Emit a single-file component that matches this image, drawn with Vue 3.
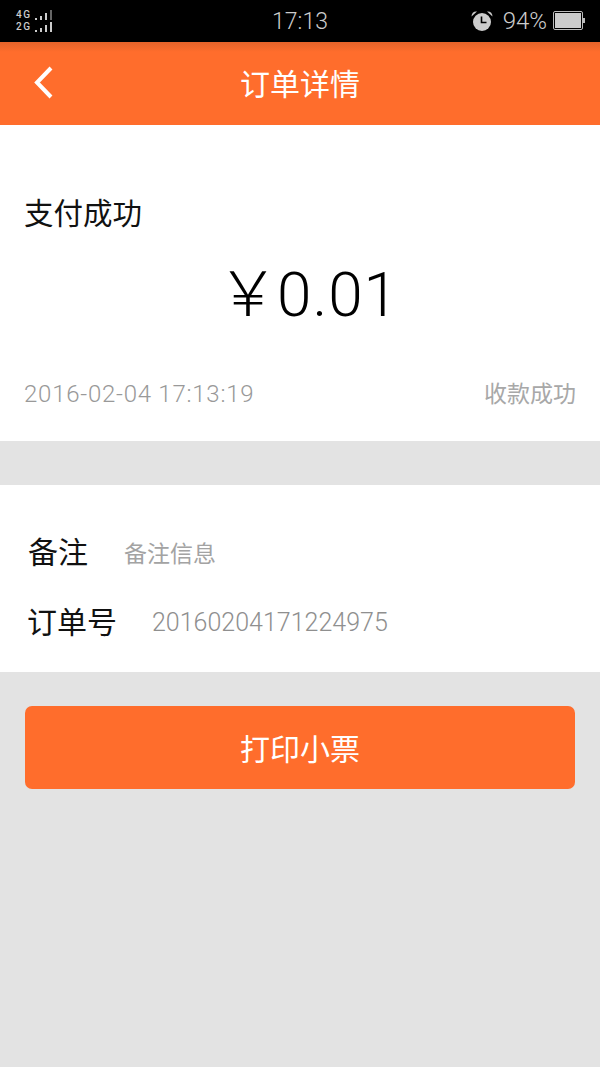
<template>
  <div class="page">
    <!-- status bar -->
    <div class="status-bar">
      <div class="signal">
        <div class="signal-row">
          <span class="net">4G</span>
          <svg width="18" height="10" viewBox="0 0 18 10">
            <rect x="1" y="8" width="2" height="2" fill="#ccc" />
            <rect x="6" y="6" width="2" height="4" fill="#ccc" />
            <rect x="11" y="3" width="2" height="7" fill="#ccc" />
            <rect x="16" y="0" width="2" height="10" fill="#666" />
          </svg>
        </div>
        <div class="signal-row">
          <span class="net">2G</span>
          <svg width="18" height="10" viewBox="0 0 18 10">
            <rect x="1" y="8" width="2" height="2" fill="#ccc" />
            <rect x="6" y="6" width="2" height="4" fill="#ccc" />
            <rect x="11" y="3" width="2" height="7" fill="#ccc" />
            <rect x="16" y="0" width="2" height="10" fill="#ccc" />
          </svg>
        </div>
      </div>
      <span class="clock">17:13</span>
      <div class="status-right">
        <svg class="alarm" width="24" height="22" viewBox="0 0 24 22">
          <circle cx="12" cy="12" r="9" fill="#ccc" />
          <path d="M1.500 6.500 C1.500 3 4 1 7 1.500 Z" fill="#ccc" />
          <path d="M22.500 6.500 C22.500 3 20 1 17 1.500 Z" fill="#ccc" />
          <path d="M11.500 6.500 V12.500 H16.500" fill="none" stroke="#000" stroke-width="1.600" />
        </svg>
        <span class="percent">94%</span>
        <svg class="battery" width="33" height="20" viewBox="0 0 33 20">
          <rect x="0.500" y="0.500" width="29" height="18" rx="1.500" fill="none" stroke="#bbb" />
          <rect x="2" y="2" width="26" height="15" fill="#ccc" />
          <rect x="30" y="7" width="2" height="5" fill="#bbb" />
        </svg>
      </div>
    </div>

    <!-- header -->
    <header class="nav">
      <svg class="back" width="22" height="34" viewBox="0 0 22 34">
        <path d="M18 2 L4 16.500 L18 31" fill="none" stroke="#fff" stroke-width="4" />
      </svg>
      <h1 class="nav-title">订单详情</h1>
    </header>

    <!-- payment summary -->
    <section class="card summary">
      <div class="pay-state">支付成功</div>
      <div class="amount"><span class="yen">￥</span>0.01</div>
      <div class="summary-foot">
        <span class="time">2016-02-04 17:13:19</span>
        <span class="result">收款成功</span>
      </div>
    </section>

    <!-- order info -->
    <section class="card info">
      <div class="row remark">
        <span class="label">备注</span>
        <span class="value">备注信息</span>
      </div>
      <div class="row order">
        <span class="label">订单号</span>
        <span class="value order-no">20160204171224975</span>
      </div>
    </section>

    <button class="print-btn">打印小票</button>
  </div>
</template>

<script setup>
</script>

<style>
html,
body {
  margin: 0;
  background: #e3e3e3;
}
</style>

<style scoped>
.page {
  width: 600px;
  height: 1067px;
  background: #e3e3e3;
  font-family: "Liberation Sans", "Noto Sans CJK SC", sans-serif;
  overflow: hidden;
}

.status-bar {
  height: 42px;
  background: #000;
  display: flex;
  align-items: center;
  justify-content: space-between;
  padding: 0 14px 0 16px;
  box-sizing: border-box;
  color: #ccc;
  position: relative;
}

.signal {
  display: flex;
  flex-direction: column;
  gap: 2px;
  width: 36px;
}

.signal-row {
  display: flex;
  align-items: flex-end;
  justify-content: space-between;
  height: 10px;
}

.net {
  font-size: 10px;
  line-height: 10px;
  letter-spacing: 1.500px;
  font-family: "Roboto", sans-serif;
  font-weight: 500;
  color: #ccc;
}

.clock {
  position: absolute;
  left: 0;
  right: 0;
  text-align: center;
  font-size: 23px;
  font-family: "Roboto", sans-serif;
  font-weight: 300;
}

.status-right {
  display: flex;
  align-items: center;
}

.alarm {
  margin-right: 9px;
}

.percent {
  font-size: 24px;
  font-family: "Roboto", sans-serif;
  font-weight: 300;
  margin-right: 6px;
}

.nav {
  height: 83px;
  box-sizing: border-box;
  padding-bottom: 3px;
  background: linear-gradient(#e5632a 0, #ff6d2c 10px, #ff6d2c 100%);
  display: flex;
  align-items: center;
  justify-content: center;
  position: relative;
}

.back {
  position: absolute;
  left: 33px;
  top: 24px;
}

.nav-title {
  margin: 0;
  font-size: 30px;
  font-weight: 400;
  color: #fff;
}

.card {
  background: #fff;
}

.summary {
  height: 316px;
  padding: 0 24px;
  box-sizing: border-box;
  display: flex;
  flex-direction: column;
}

.pay-state {
  margin-top: 69px;
  font-size: 29.500px;
  line-height: 40px;
  color: #111;
}

.amount {
  margin-top: 25px;
  padding-left: 14px;
  text-align: center;
  font-size: 62px;
  line-height: 72px;
  letter-spacing: 1px;
  color: #000;
  font-family: "Roboto", "Noto Sans CJK SC", sans-serif;
  font-weight: 300;
}

.yen {
  margin-left: 2px;
  letter-spacing: -2px;
}

.summary-foot {
  margin-top: 46px;
  display: flex;
  justify-content: space-between;
  align-items: center;
  font-size: 24px;
  line-height: 34px;
  color: #999;
}

.time {
  font-family: "Roboto", sans-serif;
  font-weight: 300;
  letter-spacing: 0.750px;
}

.result {
  font-size: 23px;
  color: #a8a8a8;
}

.info {
  margin-top: 44px;
  height: 187px;
  box-sizing: border-box;
  padding-top: 47px;
}

.row {
  display: flex;
  align-items: center;
}

.remark {
  padding-left: 28px;
  height: 40px;
}

.order {
  padding-left: 27px;
  height: 40px;
  margin-top: 30px;
}

.label {
  font-size: 30px;
  color: #111;
  margin-bottom: 4px;
}

.value {
  font-size: 23px;
  color: #a3a3a3;
  margin-left: 36px;
}

.order-no {
  font-family: "Roboto", sans-serif;
  font-weight: 300;
  font-size: 25px;
  color: #8f8f8f;
  margin-left: 35px;
}

.print-btn {
  display: block;
  width: 550px;
  height: 83px;
  margin: 34px 0 0 25px;
  border: 0;
  border-radius: 7px;
  background: #ff6d2c;
  color: #fff;
  font-size: 30px;
  font-family: inherit;
  padding: 0 0 2px;
}
</style>
